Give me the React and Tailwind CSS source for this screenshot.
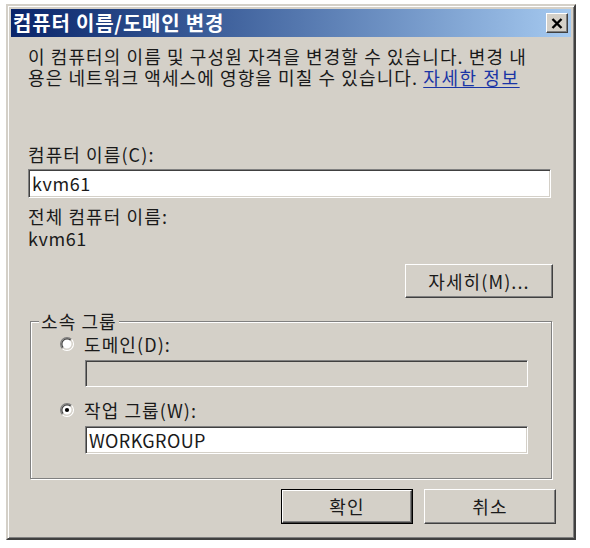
import React from "react";

const raised =
  "border border-t-white border-l-white border-b-[#404040] border-r-[#404040] shadow-[inset_-1px_-1px_0_#808080,inset_1px_1px_0_#d4d0c8]";
const sunken =
  "border border-t-[#808080] border-l-[#808080] border-b-white border-r-white shadow-[inset_1px_1px_0_#404040,inset_-1px_-1px_0_#d4d0c8]";

function Radio({ checked }) {
  return (
    <svg width="14" height="14" viewBox="0 0 12 12" className="shrink-0">
      <circle cx="6" cy="6" r="4.5" fill="white" />
      <path d="M2.11 9.89 A5.5 5.5 0 0 1 9.89 2.11" fill="none" stroke="#808080" strokeWidth="1" />
      <path d="M9.89 2.11 A5.5 5.5 0 0 1 2.11 9.89" fill="none" stroke="#ffffff" strokeWidth="1" />
      <path d="M2.82 9.18 A4.5 4.5 0 0 1 9.18 2.82" fill="none" stroke="#404040" strokeWidth="1" />
      <path d="M9.18 2.82 A4.5 4.5 0 0 1 2.82 9.18" fill="none" stroke="#d4d0c8" strokeWidth="1" />
      {checked && <circle cx="6" cy="6" r="1.8" fill="#000" />}
    </svg>
  );
}

export default function App() {
  return (
    <div className="w-[590px] h-[548px] bg-white pt-[4px] pl-[6px] font-['Noto_Sans_CJK_KR','Noto_Sans',sans-serif] text-black">
      <div className="w-[570px] h-[536px] bg-[#d4d0c8] border-2 border-t-[#d4d0c8] border-l-[#d4d0c8] border-b-[#404040] border-r-[#404040] shadow-[inset_1px_1px_0_white,inset_-1px_-1px_0_#808080] p-[3px] flex flex-col">
        {/* Title bar */}
        <div className="h-[28px] bg-gradient-to-r from-[#0a246a] to-[#a6caf0] flex items-center justify-between pl-[2px] pr-[3px]">
          <span className="text-white font-bold text-[20px] leading-none tracking-[0.8px]">
            컴퓨터 이름/도메인 변경
          </span>
          <div className={`w-[22px] h-[20px] bg-[#d4d0c8] flex items-center justify-center ${raised}`}>
            <svg width="12" height="11" viewBox="0 0 12 11">
              <path d="M1.5 1 L10.5 10 M10.5 1 L1.5 10" stroke="#000" strokeWidth="2.4" />
            </svg>
          </div>
        </div>

        {/* Body */}
        <div className="flex flex-col pl-[17px] pr-[20px] text-[18px] leading-[21px] tracking-[1.1px] text-[#1a1a1a]">
          <p className="mt-[9px]">
            이 컴퓨터의 이름 및 구성원 자격을 변경할 수 있습니다. 변경 내
            <br />
            용은 네트워크 액세스에 영향을 미칠 수 있습니다.{" "}
            <span className="text-[#1a35a5] underline underline-offset-2 tracking-[1.6px]">자세한 정보</span>
          </p>

          <div className="mt-[56px] leading-[20px]">컴퓨터 이름(C):</div>
          <div className={`mt-[5px] h-[29px] bg-white flex items-center pl-[3px] tracking-[0.6px] ${sunken}`}>
            kvm61
          </div>

          <div className="mt-[7px] leading-[22px]">전체 컴퓨터 이름:</div>
          <div className="leading-[22px] tracking-[0.6px]">kvm61</div>

          <div className="mt-[15px] flex justify-end mr-[-2px]">
            <div className={`w-[148px] h-[34px] bg-[#d4d0c8] flex items-center justify-center ${raised}`}>
              자세히(M)...
            </div>
          </div>

          <fieldset className="mt-[13px] border border-[#808080] shadow-[1px_1px_0_white,inset_1px_1px_0_white] pl-[8px] pr-[23px] pb-[24px] ml-[2px] mr-[-1px]">
            <legend className="px-[2px] bg-[#d4d0c8] leading-[20px]">소속 그룹</legend>
            <div className="flex items-center gap-[10px] ml-[21px] mt-[3px] h-[20px]">
              <Radio checked={false} />
              <span>도메인(D):</span>
            </div>
            <div className={`mt-[6px] ml-[46px] h-[27px] bg-[#d4d0c8] ${sunken}`} />
            <div className="flex items-center gap-[10px] ml-[21px] mt-[13px] h-[20px]">
              <Radio checked={true} />
              <span>작업 그룹(W):</span>
            </div>
            <div className={`mt-[6px] ml-[46px] h-[28px] bg-white flex items-center pl-[3px] tracking-[0.4px] ${sunken}`}>
              WORKGROUP
            </div>
          </fieldset>

          <div className="mt-[10px] flex justify-end gap-[11px] mr-[-5px]">
            <div className="border border-black">
              <div className={`w-[130px] h-[33px] bg-[#d4d0c8] flex items-center justify-center ${raised}`}>
                확인
              </div>
            </div>
            <div className={`w-[132px] h-[35px] bg-[#d4d0c8] flex items-center justify-center ${raised}`}>
              취소
            </div>
          </div>
        </div>
      </div>
    </div>
  );
}
